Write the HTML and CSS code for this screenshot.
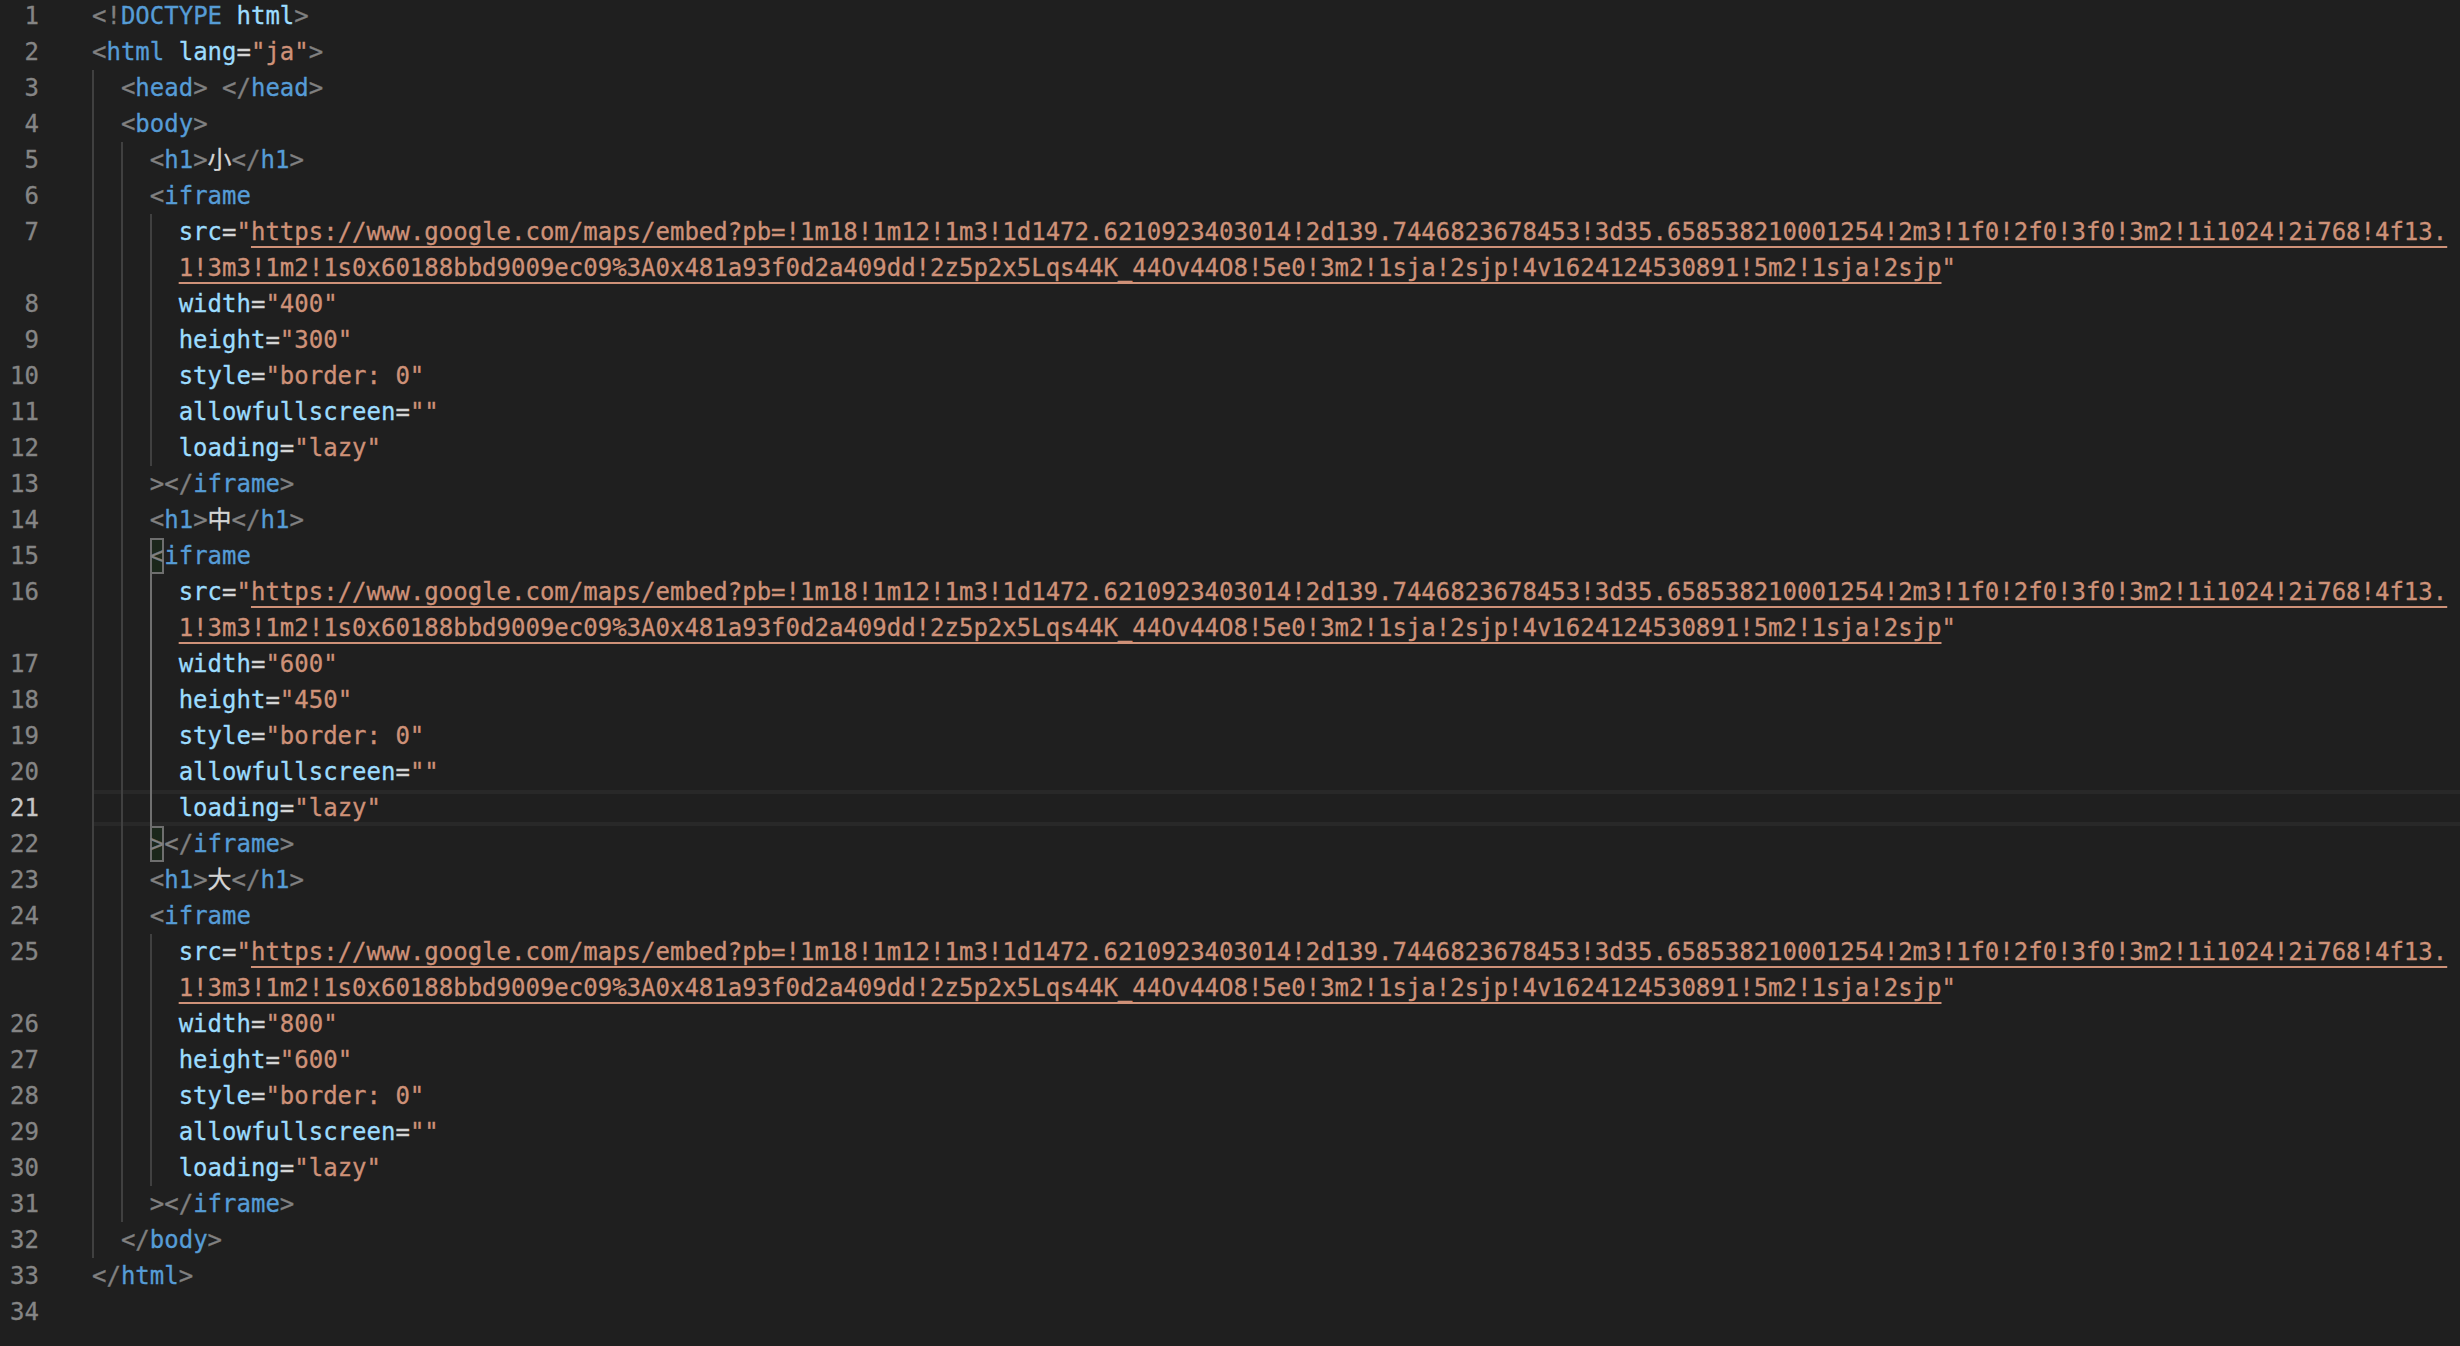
FILE: index.html
```html
<!DOCTYPE html>
<html lang="ja">
<head>
<meta charset="utf-8">
<title>index.html</title>
<link rel="stylesheet" href="styles.css">
</head>
<body>
<div class="editor">
  <div class="row"><span class="ln">1</span><div class="code"><span class="tx"><span class="p">&lt;!</span><span class="t">DOCTYPE</span> <span class="a">html</span><span class="p">&gt;</span></span></div></div>
  <div class="row"><span class="ln">2</span><div class="code"><span class="tx"><span class="p">&lt;</span><span class="t">html</span> <span class="a">lang</span>=<span class="s">"ja"</span><span class="p">&gt;</span></span></div></div>
  <div class="row"><span class="ln">3</span><div class="code"><span class="ig"></span><span class="tx"><span class="p">&lt;</span><span class="t">head</span><span class="p">&gt;</span> <span class="p">&lt;/</span><span class="t">head</span><span class="p">&gt;</span></span></div></div>
  <div class="row"><span class="ln">4</span><div class="code"><span class="ig"></span><span class="tx"><span class="p">&lt;</span><span class="t">body</span><span class="p">&gt;</span></span></div></div>
  <div class="row"><span class="ln">5</span><div class="code"><span class="ig"></span><span class="ig"></span><span class="tx"><span class="p">&lt;</span><span class="t">h1</span><span class="p">&gt;</span>小<span class="p">&lt;/</span><span class="t">h1</span><span class="p">&gt;</span></span></div></div>
  <div class="row"><span class="ln">6</span><div class="code"><span class="ig"></span><span class="ig"></span><span class="tx"><span class="p">&lt;</span><span class="t">iframe</span></span></div></div>
  <div class="row"><span class="ln">7</span><div class="code"><span class="ig"></span><span class="ig"></span><span class="ig"></span><span class="tx"><span class="a">src</span>=<span class="s">"<span class="u">https://www.google.com/maps/embed?pb=!1m18!1m12!1m3!1d1472.6210923403014!2d139.7446823678453!3d35.658538210001254!2m3!1f0!2f0!3f0!3m2!1i1024!2i768!4f13.</span></span></span></div></div>
  <div class="row"><span class="ln"></span><div class="code"><span class="ig"></span><span class="ig"></span><span class="ig"></span><span class="tx"><span class="s"><span class="u">1!3m3!1m2!1s0x60188bbd9009ec09%3A0x481a93f0d2a409dd!2z5p2x5Lqs44K_44Ov44O8!5e0!3m2!1sja!2sjp!4v1624124530891!5m2!1sja!2sjp</span>"</span></span></div></div>
  <div class="row"><span class="ln">8</span><div class="code"><span class="ig"></span><span class="ig"></span><span class="ig"></span><span class="tx"><span class="a">width</span>=<span class="s">"400"</span></span></div></div>
  <div class="row"><span class="ln">9</span><div class="code"><span class="ig"></span><span class="ig"></span><span class="ig"></span><span class="tx"><span class="a">height</span>=<span class="s">"300"</span></span></div></div>
  <div class="row"><span class="ln">10</span><div class="code"><span class="ig"></span><span class="ig"></span><span class="ig"></span><span class="tx"><span class="a">style</span>=<span class="s">"border: 0"</span></span></div></div>
  <div class="row"><span class="ln">11</span><div class="code"><span class="ig"></span><span class="ig"></span><span class="ig"></span><span class="tx"><span class="a">allowfullscreen</span>=<span class="s">""</span></span></div></div>
  <div class="row"><span class="ln">12</span><div class="code"><span class="ig"></span><span class="ig"></span><span class="ig"></span><span class="tx"><span class="a">loading</span>=<span class="s">"lazy"</span></span></div></div>
  <div class="row"><span class="ln">13</span><div class="code"><span class="ig"></span><span class="ig"></span><span class="tx"><span class="p">&gt;&lt;/</span><span class="t">iframe</span><span class="p">&gt;</span></span></div></div>
  <div class="row"><span class="ln">14</span><div class="code"><span class="ig"></span><span class="ig"></span><span class="tx"><span class="p">&lt;</span><span class="t">h1</span><span class="p">&gt;</span>中<span class="p">&lt;/</span><span class="t">h1</span><span class="p">&gt;</span></span></div></div>
  <div class="row"><span class="ln">15</span><div class="code"><span class="ig"></span><span class="ig"></span><span class="tx"><span class="p bm">&lt;</span><span class="t">iframe</span></span></div></div>
  <div class="row"><span class="ln">16</span><div class="code"><span class="ig"></span><span class="ig"></span><span class="ig act"></span><span class="tx"><span class="a">src</span>=<span class="s">"<span class="u">https://www.google.com/maps/embed?pb=!1m18!1m12!1m3!1d1472.6210923403014!2d139.7446823678453!3d35.658538210001254!2m3!1f0!2f0!3f0!3m2!1i1024!2i768!4f13.</span></span></span></div></div>
  <div class="row"><span class="ln"></span><div class="code"><span class="ig"></span><span class="ig"></span><span class="ig act"></span><span class="tx"><span class="s"><span class="u">1!3m3!1m2!1s0x60188bbd9009ec09%3A0x481a93f0d2a409dd!2z5p2x5Lqs44K_44Ov44O8!5e0!3m2!1sja!2sjp!4v1624124530891!5m2!1sja!2sjp</span>"</span></span></div></div>
  <div class="row"><span class="ln">17</span><div class="code"><span class="ig"></span><span class="ig"></span><span class="ig act"></span><span class="tx"><span class="a">width</span>=<span class="s">"600"</span></span></div></div>
  <div class="row"><span class="ln">18</span><div class="code"><span class="ig"></span><span class="ig"></span><span class="ig act"></span><span class="tx"><span class="a">height</span>=<span class="s">"450"</span></span></div></div>
  <div class="row"><span class="ln">19</span><div class="code"><span class="ig"></span><span class="ig"></span><span class="ig act"></span><span class="tx"><span class="a">style</span>=<span class="s">"border: 0"</span></span></div></div>
  <div class="row"><span class="ln">20</span><div class="code"><span class="ig"></span><span class="ig"></span><span class="ig act"></span><span class="tx"><span class="a">allowfullscreen</span>=<span class="s">""</span></span></div></div>
  <div class="row cur"><span class="ln">21</span><div class="code"><span class="ig"></span><span class="ig"></span><span class="ig act"></span><span class="tx"><span class="a">loading</span>=<span class="s">"lazy"</span></span></div></div>
  <div class="row"><span class="ln">22</span><div class="code"><span class="ig"></span><span class="ig"></span><span class="tx"><span class="p bm">&gt;</span><span class="p">&lt;/</span><span class="t">iframe</span><span class="p">&gt;</span></span></div></div>
  <div class="row"><span class="ln">23</span><div class="code"><span class="ig"></span><span class="ig"></span><span class="tx"><span class="p">&lt;</span><span class="t">h1</span><span class="p">&gt;</span>大<span class="p">&lt;/</span><span class="t">h1</span><span class="p">&gt;</span></span></div></div>
  <div class="row"><span class="ln">24</span><div class="code"><span class="ig"></span><span class="ig"></span><span class="tx"><span class="p">&lt;</span><span class="t">iframe</span></span></div></div>
  <div class="row"><span class="ln">25</span><div class="code"><span class="ig"></span><span class="ig"></span><span class="ig"></span><span class="tx"><span class="a">src</span>=<span class="s">"<span class="u">https://www.google.com/maps/embed?pb=!1m18!1m12!1m3!1d1472.6210923403014!2d139.7446823678453!3d35.658538210001254!2m3!1f0!2f0!3f0!3m2!1i1024!2i768!4f13.</span></span></span></div></div>
  <div class="row"><span class="ln"></span><div class="code"><span class="ig"></span><span class="ig"></span><span class="ig"></span><span class="tx"><span class="s"><span class="u">1!3m3!1m2!1s0x60188bbd9009ec09%3A0x481a93f0d2a409dd!2z5p2x5Lqs44K_44Ov44O8!5e0!3m2!1sja!2sjp!4v1624124530891!5m2!1sja!2sjp</span>"</span></span></div></div>
  <div class="row"><span class="ln">26</span><div class="code"><span class="ig"></span><span class="ig"></span><span class="ig"></span><span class="tx"><span class="a">width</span>=<span class="s">"800"</span></span></div></div>
  <div class="row"><span class="ln">27</span><div class="code"><span class="ig"></span><span class="ig"></span><span class="ig"></span><span class="tx"><span class="a">height</span>=<span class="s">"600"</span></span></div></div>
  <div class="row"><span class="ln">28</span><div class="code"><span class="ig"></span><span class="ig"></span><span class="ig"></span><span class="tx"><span class="a">style</span>=<span class="s">"border: 0"</span></span></div></div>
  <div class="row"><span class="ln">29</span><div class="code"><span class="ig"></span><span class="ig"></span><span class="ig"></span><span class="tx"><span class="a">allowfullscreen</span>=<span class="s">""</span></span></div></div>
  <div class="row"><span class="ln">30</span><div class="code"><span class="ig"></span><span class="ig"></span><span class="ig"></span><span class="tx"><span class="a">loading</span>=<span class="s">"lazy"</span></span></div></div>
  <div class="row"><span class="ln">31</span><div class="code"><span class="ig"></span><span class="ig"></span><span class="tx"><span class="p">&gt;&lt;/</span><span class="t">iframe</span><span class="p">&gt;</span></span></div></div>
  <div class="row"><span class="ln">32</span><div class="code"><span class="ig"></span><span class="tx"><span class="p">&lt;/</span><span class="t">body</span><span class="p">&gt;</span></span></div></div>
  <div class="row"><span class="ln">33</span><div class="code"><span class="tx"><span class="p">&lt;/</span><span class="t">html</span><span class="p">&gt;</span></span></div></div>
  <div class="row"><span class="ln">34</span><div class="code"><span class="tx"></span></div></div>
</div>
</body>
</html>
```

FILE: styles.css
```css
html, body {
  margin: 0;
  padding: 0;
  background: #1f1f1f;
}

body {
  font-family: "DejaVu Sans Mono", "Noto Sans CJK JP", monospace;
  font-size: 24px;
  color: #d4d4d4;
  min-height: 1346px;
  overflow: hidden;
  -webkit-text-stroke: 0.3px currentColor;
}

.editor {
  margin-top: -2px;
}

.row {
  display: flex;
  height: 36px;
  line-height: 36px;
}

.ln {
  flex: none;
  width: 39px;
  text-align: right;
  color: #858585;
}

.row.cur .ln {
  color: #c6c6c6;
}

.code {
  flex: 1;
  display: flex;
  margin-left: 53px;
  min-width: 0;
}

.row.cur .code {
  box-shadow: inset 0 4px #282828, inset 0 -4px #282828;
}

.ig {
  flex: none;
  width: 2ch;
  box-shadow: inset 2px 0 #404040;
}

.ig.act {
  box-shadow: inset 2px 0 #707070;
}

.tx {
  white-space: pre;
}

.p { color: #808080; }
.t { color: #569cd6; }
.a { color: #9cdcfe; }
.s { color: #ce9178; }

.u {
  text-decoration: underline;
  text-decoration-thickness: 2px;
  text-underline-offset: 6px;
}

.bm {
  display: inline-block;
  height: 36px;
  vertical-align: top;
  background: rgba(0, 100, 0, 0.12);
  box-shadow: inset 0 0 0 2px #6e6e6e;
}
```
